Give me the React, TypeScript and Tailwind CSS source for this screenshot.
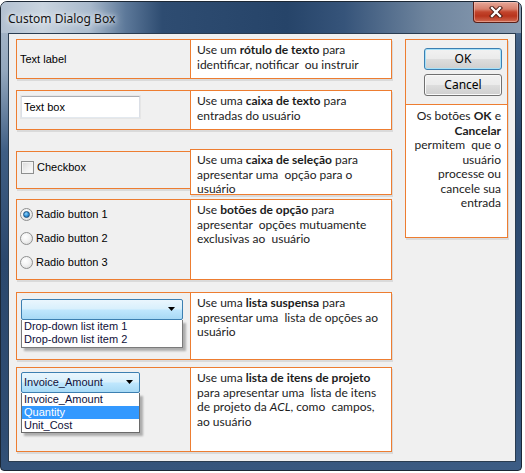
import React from "react";

const ctl = { fontFamily: '"Liberation Sans", Arial, sans-serif' };
const desc = { fontFamily: 'Lato, "Open Sans", sans-serif' };
const ui = { fontFamily: '"Noto Sans", "Open Sans", sans-serif' };

function Row({
  mt,
  leftH,
  rightH,
  leftMt = "",
  left,
  right,
  leftCls = "",
}: {
  mt: string;
  leftH: string;
  rightH: string;
  leftMt?: string;
  left: React.ReactNode;
  right: React.ReactNode;
  leftCls?: string;
}) {
  return (
    <div className={`flex items-start ${mt}`}>
      <div
        className={`w-[175px] ${leftH} ${leftMt} border border-[#ed7d31] bg-[#f0f0f0] shadow-[1px_2px_0_#dadada] ${leftCls}`}
      >
        {left}
      </div>
      <div
        className={`-ml-px w-[202px] ${rightH} border border-[#ed7d31] bg-white shadow-[1px_2px_0_#dadada] pl-[6px] pt-[3px] text-[12px] leading-[14.5px] text-[#1c1c1c] whitespace-pre`}
        style={desc}
      >
        {right}
      </div>
    </div>
  );
}

function Arrow() {
  return (
    <svg width="8" height="5" viewBox="0 0 8 5" className="block">
      <path d="M0 0 H7 L3.5 4 Z" fill="#000" />
    </svg>
  );
}

function Radio({ checked, label }: { checked?: boolean; label: string }) {
  return (
    <div className="flex items-center h-[13px]">
      <div className="w-[13px] h-[13px] rounded-full border border-[#8e8f8f] bg-[radial-gradient(circle_at_40%_35%,#ffffff_0%,#f2f2f2_45%,#d4d4d4_100%)] flex items-center justify-center">
        {checked && (
          <div className="w-[7px] h-[7px] rounded-full border border-[#1b4f7e] bg-[radial-gradient(circle_at_40%_35%,#9fd6f7_0%,#3a9be0_45%,#0e5b9c_100%)]" />
        )}
      </div>
      <span className="ml-[3px] text-[11px] leading-[13px] text-black">{label}</span>
    </div>
  );
}

export default function App() {
  return (
    <div className="w-[525px] h-[473px] bg-white pt-px" style={ctl}>
      <div className="w-[522px] h-[470px] flex flex-col rounded-t-[7px] rounded-b-[4px] border border-[#1b2735] overflow-hidden bg-[linear-gradient(168deg,#aebdce_0%,#93a7bd_12%,#3f5e84_26%,#2b486d_45%,#2f4d73_75%,#3d5d85_100%)]">
        {/* Title bar */}
        <div className="h-[31px] flex items-start shrink-0 bg-[linear-gradient(90deg,#b3c1d1_0%,#c9d4df_8%,#a9bacd_17%,#5c7899_24%,#2e4c71_31%,#264469_55%,#36547a_66%,#6f859e_82%,#8c9eb4_100%)]">
          <span
            className="mt-[9px] ml-[7px] text-[12px] leading-[16px] text-[#141414] [text-shadow:0_0_5px_#ffffff,0_0_9px_#e8eef5]"
            style={ui}
          >
            Custom Dialog Box
          </span>
          <div className="ml-auto mr-[2px] w-[46px] h-[21px] rounded-b-[4px] border border-t-0 border-[#5a2019] bg-[linear-gradient(180deg,#e6a799_0%,#d7806c_35%,#c2442c_50%,#b8341d_70%,#cf6a52_100%)] shadow-[inset_0_0_0_1px_rgba(255,210,200,0.45)] flex items-center justify-center">
            <svg width="14" height="12" viewBox="0 0 14 12">
              <path d="M3 2 L11 10 M11 2 L3 10" stroke="#4a1a12" strokeWidth="4.2" strokeLinecap="square" />
              <path d="M3 2 L11 10 M11 2 L3 10" stroke="#ffffff" strokeWidth="2.3" strokeLinecap="square" />
            </svg>
          </div>
        </div>

        {/* Client area */}
        <div className="ml-[7px] w-[508px] h-[429px] shrink-0 border border-[#2a3c50] bg-[#f0f0f0] flex items-start pl-[7px] pt-[5px]">
          <div className="w-[376px] flex flex-col">
            <Row
              mt=""
              leftH="h-[40px]"
              rightH="h-[40px]"
              leftCls="flex items-center pl-[3px]"
              left={<span className="text-[11px] text-black">Text label</span>}
              right={
                <>
                  Use um <b>rótulo de texto</b> para{"\n"}identificar, notificar  ou instruir
                </>
              }
            />
            <Row
              mt="mt-[11px]"
              leftH="h-[40px]"
              rightH="h-[40px]"
              leftCls="pl-[4px] pt-[5px]"
              left={
                <div className="w-[119px] h-[22px] border border-[#abadb3] border-b-[#e3e9ef] border-x-[#dbdfe6] bg-white shadow-[0_0_0_1px_#e6e6e6] flex items-center pl-[2px]">
                  <span className="text-[11px] text-black">Text box</span>
                </div>
              }
              right={
                <>
                  Use uma <b>caixa de texto</b> para{"\n"}entradas do usuário
                </>
              }
            />
            <Row
              mt="mt-[19px]"
              leftMt="mt-[2px]"
              leftH="h-[38px]"
              rightH="h-[46px]"
              leftCls="pl-[4px] pt-[9px]"
              left={
                <div className="flex items-center">
                  <div className="w-[13px] h-[13px] border border-[#8e8f8f] bg-[linear-gradient(135deg,#d8d8d8_0%,#eeeeee_50%,#ffffff_100%)] shadow-[inset_0_0_0_1px_#f4f4f4]" />
                  <span className="ml-[3px] text-[11px] leading-[13px] text-black">Checkbox</span>
                </div>
              }
              right={
                <>
                  Use uma <b>caixa de seleção</b> para{"\n"}apresentar uma  opção para o{"\n"}usuário
                </>
              }
            />
            <Row
              mt="mt-[4px]"
              leftH="h-[81px]"
              rightH="h-[81px]"
              leftCls="pl-[3px] pt-[8px] flex flex-col gap-[11px]"
              left={
                <>
                  <Radio checked label="Radio button 1" />
                  <Radio label="Radio button 2" />
                  <Radio label="Radio button 3" />
                </>
              }
              right={
                <>
                  Use <b>botões de opção</b> para{"\n"}apresentar  opções mutuamente{"\n"}exclusivas ao  usuário
                </>
              }
            />
            <Row
              mt="mt-[12px]"
              leftH="h-[68px]"
              rightH="h-[68px]"
              leftCls="pl-[4px] pt-[6px]"
              left={
                <div className="w-[162px]">
                  <div className="h-[21px] rounded-[2px] border border-[#3c7fb1] bg-[linear-gradient(180deg,#eaf6fd_0%,#d9f0fc_45%,#bee6fd_55%,#a7d9f5_100%)] flex items-center justify-end pr-[6px]">
                    <Arrow />
                  </div>
                  <div className="h-[28px] border border-[#7a7a7a] border-t-0 bg-white shadow-[3px_3px_2px_rgba(0,0,0,0.28)] pl-[2px] text-[11px] leading-[13px] text-[#10103a]">
                    <div>Drop-down list item 1</div>
                    <div>Drop-down list item 2</div>
                  </div>
                </div>
              }
              right={
                <>
                  Use uma <b>lista suspensa</b> para{"\n"}apresentar uma  lista de opções ao{"\n"}usuário
                </>
              }
            />
            <Row
              mt="mt-[7px]"
              leftH="h-[85px]"
              rightH="h-[85px]"
              leftCls="pl-[4px] pt-[4px]"
              left={
                <div className="w-[119px]">
                  <div className="h-[21px] rounded-[2px] border border-[#3c7fb1] bg-[linear-gradient(180deg,#eaf6fd_0%,#d9f0fc_45%,#bee6fd_55%,#a7d9f5_100%)] flex items-center pl-[2px] pr-[5px]">
                    <span className="text-[11px] text-[#10103a]">Invoice_Amount</span>
                    <span className="ml-auto">
                      <Arrow />
                    </span>
                  </div>
                  <div className="h-[40px] border border-[#6a6a6a] border-t-0 bg-white shadow-[3px_3px_2px_rgba(0,0,0,0.28)] text-[11px] leading-[13px] text-[#10103a]">
                    <div className="pl-[2px]">Invoice_Amount</div>
                    <div className="pl-[2px] bg-[#3399ff] text-white">Quantity</div>
                    <div className="pl-[2px]">Unit_Cost</div>
                  </div>
                </div>
              }
              right={
                <>
                  Use uma <b>lista de itens de projeto</b>{"\n"}para apresentar uma  lista de itens{"\n"}de projeto da <i>ACL</i>, como  campos,{"\n"}ao usuário
                </>
              }
            />
          </div>

          {/* Right column */}
          <div className="ml-[13px] w-[103px] h-[199px] border border-[#ed7d31] shadow-[1px_2px_0_#dadada] flex flex-col">
            <div className="h-[65px] border-b border-[#ed7d31] bg-[#f0f0f0] pl-[18px] pt-[8px] flex flex-col gap-[4px]" style={ui}>
              <div className="w-[78px] h-[22px] rounded-[3px] border border-[#3c7fb1] bg-[linear-gradient(180deg,#f2f2f2_0%,#ebebeb_48%,#dddddd_52%,#cfcfcf_100%)] shadow-[inset_0_0_0_1px_#a6e1f9] flex items-center justify-center text-[12px] text-black">
                OK
              </div>
              <div className="w-[78px] h-[22px] rounded-[3px] border border-[#707070] bg-[linear-gradient(180deg,#f2f2f2_0%,#ebebeb_48%,#dddddd_52%,#cfcfcf_100%)] shadow-[inset_0_0_0_1px_#fafafa] flex items-center justify-center text-[12px] text-black">
                Cancel
              </div>
            </div>
            <div
              className="flex-1 bg-white pr-[6px] pt-[4px] text-right text-[12px] leading-[14.5px] text-[#1c1c1c] whitespace-pre"
              style={desc}
            >
              Os botões <b>OK</b> e{"\n"}
              <b>Cancelar</b>
              {"\n"}permitem  que o{"\n"}usuário{"\n"}processe ou{"\n"}cancele sua{"\n"}entrada
            </div>
          </div>
        </div>
      </div>
    </div>
  );
}
